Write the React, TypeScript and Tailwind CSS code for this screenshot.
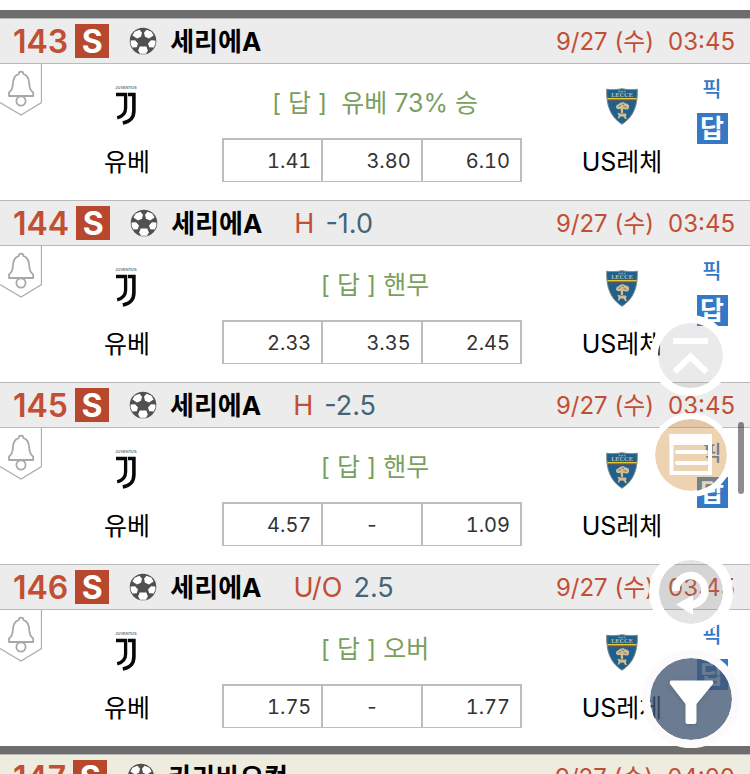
import React from "react";

type Match = {
  no: number;
  league: string;
  mark?: string;
  line?: string;
  date: string;
  time: string;
  answer: string;
  home: string;
  away: string;
  odds: string[];
};

const matches: Match[] = [
  { no: 143, league: "세리에A", date: "9/27 (수)", time: "03:45", answer: "[ 답 ]  유베 73% 승", home: "유베", away: "US레체", odds: ["1.41", "3.80", "6.10"] },
  { no: 144, league: "세리에A", mark: "H", line: "-1.0", date: "9/27 (수)", time: "03:45", answer: "[ 답 ] 핸무", home: "유베", away: "US레체", odds: ["2.33", "3.35", "2.45"] },
  { no: 145, league: "세리에A", mark: "H", line: "-2.5", date: "9/27 (수)", time: "03:45", answer: "[ 답 ] 핸무", home: "유베", away: "US레체", odds: ["4.57", "-", "1.09"] },
  { no: 146, league: "세리에A", mark: "U/O", line: "2.5", date: "9/27 (수)", time: "03:45", answer: "[ 답 ] 오버", home: "유베", away: "US레체", odds: ["1.75", "-", "1.77"] },
];

function Ball() {
  return (
    <svg viewBox="0 0 28 28" className="ml-5 h-7 w-7 shrink-0" aria-hidden="true">
      <circle cx="14" cy="14" r="13.3" fill="#505050" />
      <g fill="#fff">
        <path d="M5.5 4.8 10.5 2.8 13 5.8 12 9.8 8 11.6 3.4 8.4Z" />
        <path d="M22.5 4.8 17.5 2.8 15 5.8 16 9.8 20 11.6 24.6 8.4Z" />
        <path d="M1.6 13.6 6 13.2 9 16.4 7.8 20.2 3.4 20.6 1.6 17Z" />
        <path d="M26.4 13.6 22 13.2 19 16.4 20.2 20.2 24.6 20.6 26.4 17Z" />
        <path d="M10.6 19.6H17.4L18.8 23.4 17 26.8H11L9.2 23.4Z" />
      </g>
    </svg>
  );
}

function Bell() {
  return (
    <svg viewBox="0 0 42 52" className="h-[52px] w-[42px]" fill="none" stroke="#adadad" aria-hidden="true">
      <path d="M41.5 0V38.5L21 51 0 38.5" strokeWidth="1.3" />
      <g stroke="#a8a8a8" strokeWidth="1.8" strokeLinejoin="round">
        <path d="M9 32V28.5C11.6 26.5 12.6 24.5 12.8 20.5 13.1 14.5 14.8 11.2 18.6 10.2 18.8 6.8 23.4 6.8 23.6 10.2 27.4 11.2 29 14.5 29.3 20.5 29.5 24.5 30.4 26.5 33.2 28.5V32Z" />
        <circle cx="21" cy="37" r="4.6" />
      </g>
    </svg>
  );
}

function HomeCrest() {
  return (
    <svg viewBox="0 0 24 40" className="h-10 w-6" role="img" aria-label="Juventus">
      <text x="11" y="3.200" fontSize="4" fontWeight="700" textAnchor="middle" fill="#777" fontFamily="Liberation Sans, sans-serif">JUVENTUS</text>
      <g fill="none" stroke="#080808">
        <path d="M1 8.500H10.600V22C10.600 27.500 7.500 30.500 2.200 31.800" strokeWidth="3.300" />
        <path d="M13 8.500H18.900V24.500C18.900 32 15.500 35.500 7.800 37" strokeWidth="3.600" />
      </g>
    </svg>
  );
}

function AwayCrest() {
  return (
    <svg viewBox="0 0 32 37" className="h-[37px] w-8" role="img" aria-label="Lecce">
      <path d="M.7 1.2C5 2 11 1.7 16 .7 21 1.7 27 2 31.3 1.2 31.8 17 28 28.5 16 36.3 4 28.5.2 17 .7 1.2Z" fill="#20608c" stroke="#768c8d" />
      <path d="M12.5 3.5H19.5" stroke="#95a08a" strokeWidth="1.5" strokeDasharray="2 .8" />
      <text x="16" y="9.300" fontSize="6.300" fontWeight="700" textAnchor="middle" fill="#b8c2ac" fontFamily="Liberation Serif, serif">LECCE</text>
      <path d="M1.5 10.800H30.5" stroke="#ead237" strokeWidth="1.500" />
      <path d="M2 12H30" stroke="#b64233" strokeWidth=".8" />
      <g fill="#d4bd91">
        <path d="M10 18.8C10.5 16 13 16.6 13.8 15 16 13.6 18.5 14.2 19.2 15.4 22.4 15.4 23.6 17.4 23 19.4 22.6 22 19.8 22 17.2 20.8L17 25H15L14.6 20.8C12.5 21.6 9.8 21.4 10 18.8Z" />
        <path d="M11.4 24.6C15 26.6 18 24.8 20.6 26L20 28.8 20.8 31H19L17.8 28.8 14.4 28.4 13.2 30.4H11.8L12.6 27.4Z" />
      </g>
      <path d="M12.5 18.6 15 17.4M17.5 18.4 20.6 19.4M15.6 16 18 16.6" stroke="#4b7386" strokeWidth=".8" />
    </svg>
  );
}

function GameHeader({ game, tone }: { game: Partial<Match>; tone: string }) {
  return (
    <header className={`flex h-[46px] items-center whitespace-nowrap border-y border-[#b9b9b9] pr-[15px] pl-[13px] ${tone}`}>
      <span className="pt-[2px] text-[32px] leading-8 font-semibold text-[#c24f34]">{game.no}</span>
      <span className="ml-[7px] flex h-[34px] w-[34px] items-center justify-center bg-[#b7482d] pt-[2px] text-[32px] leading-8 font-bold text-white">S</span>
      <Ball />
      <h2 className="ml-[13px] pt-[2px] text-[26px] leading-8 font-bold text-black">{game.league}</h2>
      {game.mark && (
        <p className="ml-8 flex gap-[11px] pt-[2px] text-[27px] leading-8 text-[#446478]">
          <span className="text-[#c24f34]">{game.mark}</span>
          <span>{game.line}</span>
        </p>
      )}
      <p className="ml-auto flex gap-[14px] pt-[2px] text-2xl leading-8 text-[#c24f34]">
        <span>{game.date}</span>
        <time>{game.time}</time>
      </p>
    </header>
  );
}

function Team({ name, children }: { name: string; children: React.ReactNode }) {
  return (
    <div className="flex flex-col items-center pt-5 whitespace-nowrap">
      <div className="flex h-11 items-center">{children}</div>
      <span className="mt-[18px] text-[25px] leading-8 text-black">{name}</span>
    </div>
  );
}

function Game({ game }: { game: Match }) {
  return (
    <article>
      <GameHeader game={game} tone="bg-[#ececec]" />
      <div className="grid h-[136px] grid-cols-[1fr_300px_1fr] pr-[6px]">
        <div className="grid grid-cols-[42px_1fr] items-start pr-[10px]">
          <button type="button" aria-label="알림"><Bell /></button>
          <Team name={game.home}><HomeCrest /></Team>
        </div>
        <div className="pt-[23px]">
          <p className="pl-[6px] text-center text-[25px] leading-8 whitespace-pre text-[#7a9f5e]">{game.answer}</p>
          <table className="mt-[19px] h-11 w-full table-fixed border-separate border-spacing-0 border-t-2 border-b border-l-2 border-[#bdbdbd]">
            <tbody>
              <tr>
                {game.odds.map((odd, i) => (
                  <td key={i} className={`border-r-2 border-[#bdbdbd] p-0 text-xl leading-6 tabular-nums text-[#333] ${odd === "-" ? "text-center" : "pr-[10px] text-right"}`}>{odd}</td>
                ))}
              </tr>
            </tbody>
          </table>
        </div>
        <div className="grid grid-cols-[1fr_64px] pl-[42px]">
          <Team name={game.away}><AwayCrest /></Team>
          <div className="flex flex-col items-center gap-2 pt-[9px] text-[#3478c6]">
            <button type="button" className="text-[21px] leading-8 font-medium">픽</button>
            <button type="button" className="flex h-[31px] w-[31px] items-center justify-center bg-[#3478c6] text-[26px] leading-[31px] font-bold text-white">답</button>
          </div>
        </div>
      </div>
    </article>
  );
}

function FloatingMenu() {
  return (
    <nav className="absolute top-[315px] right-[10px] flex flex-col items-center" aria-label="빠른 메뉴">
      <button type="button" aria-label="맨 위로" className="mr-[2px] h-[81px] w-[81px] rounded-full border-8 border-white bg-[rgba(150,150,150,0.2)] bg-clip-padding">
        <svg viewBox="0 0 65 65" className="h-full w-full" fill="none" stroke="#fff" strokeWidth="6">
          <path d="M15 18H50M16.5 49 32.5 33.5 48.500 49" />
        </svg>
      </button>
      <button type="button" aria-label="목록" className="mt-[17px] h-[84px] w-[84px] rounded-full border-[6px] border-white bg-[rgba(210,145,60,0.4)] bg-clip-padding">
        <svg viewBox="0 0 72 72" className="h-full w-full" fill="none" stroke="#fff" strokeWidth="4">
          <path d="M16.500 17V54H55V17Z" />
          <path d="M14.500 20.500H57" strokeWidth="11" />
          <path d="M22 33H51M22 44H51" strokeLinecap="round" />
        </svg>
      </button>
      <button type="button" aria-label="새로고침" className="mt-[53px] h-[84px] w-[84px] rounded-full border-10 border-white bg-[rgba(130,130,130,0.22)] bg-clip-padding">
        <svg viewBox="0 0 64 64" className="h-full w-full">
          <path d="M17 31A14.500 14.500 0 1 1 33 44.500" fill="none" stroke="#fff" strokeWidth="7.500" />
          <path d="M17 44.500 34 35V55Z" fill="#fff" />
        </svg>
      </button>
      <button type="button" aria-label="필터" className="mt-4 h-[98px] w-[98px] rounded-full border-8 border-[#fdfafb] bg-[rgba(65,87,115,0.78)] bg-clip-padding">
        <svg viewBox="0 0 82 82" className="h-full w-full">
          <path d="M21 22.500H62Q64 23.500 63 26L46.500 46V64Q46 66 44.500 66H37Q35.500 66 35.500 64V46L20 26Q19 23.500 21 22.500Z" fill="#fff" className="drop-shadow-sm" />
        </svg>
      </button>
    </nav>
  );
}

export default function App() {
  return (
    <main className="relative h-screen overflow-hidden bg-white pt-[10px] font-['Inter','Noto_Sans_CJK_KR',sans-serif]">
      <div className="h-2 bg-[#6d6d6d]" />
      {matches.map((game) => <Game key={game.no} game={game} />)}
      <div className="h-2 bg-[#6d6d6d]" />
      <GameHeader game={{ no: 147, league: "카라바오컵", date: "9/27 (수)", time: "04:00" }} tone="bg-[#eeecdf]" />
      <FloatingMenu />
      <div className="absolute top-[422px] right-[6px] h-[72px] w-[6px] rounded-full bg-black/45" />
    </main>
  );
}
